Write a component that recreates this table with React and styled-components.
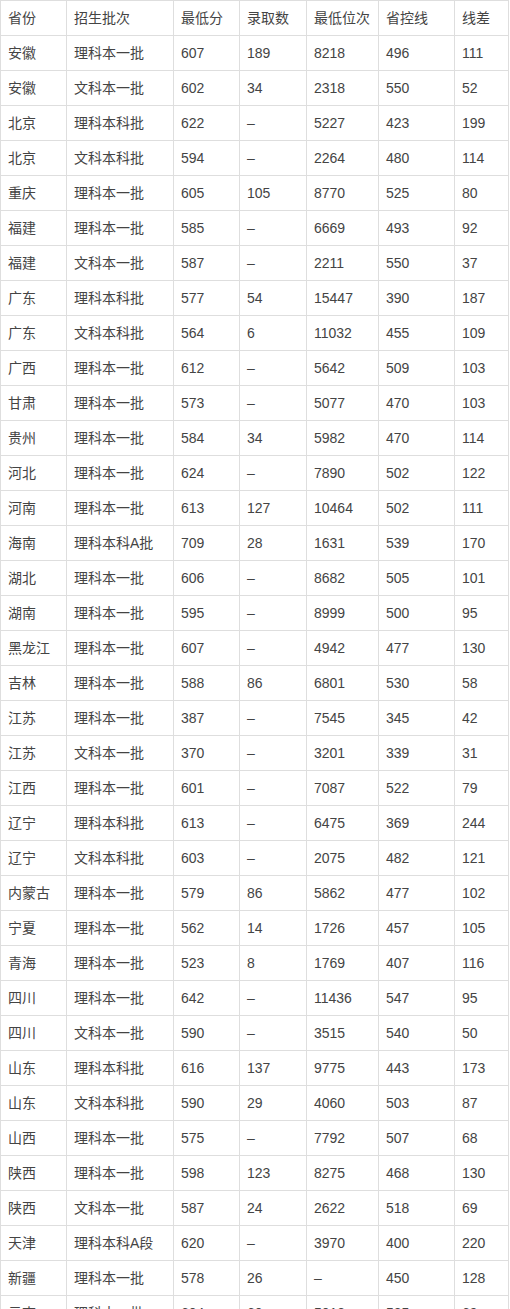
import React from "react";
import styled, { createGlobalStyle } from "styled-components";

const Global = createGlobalStyle`
  html, body { margin: 0; padding: 0; background: #fff; }
  body { font-family: "Liberation Sans", Arial, "Noto Sans CJK SC", sans-serif; }
`;

const Table = styled.table`
  border-collapse: collapse;
  table-layout: fixed;
  width: 508px;
  font-size: 14px;
  color: #444;
`;

const Cell = styled.td`
  border: 1px solid #dedede;
  height: 35px;
  padding: 0 7px;
  box-sizing: border-box;
  white-space: nowrap;
  overflow: hidden;
  vertical-align: middle;
  line-height: 20px;
`;

const HeadCell = styled(Cell).attrs({ as: "th" })`
  font-weight: normal;
  text-align: left;
`;

const widths = [66, 107, 66, 67, 72, 76, 54];
const head = ["省份", "招生批次", "最低分", "录取数", "最低位次", "省控线", "线差"];

const rows = [
  ["安徽", "理科本一批", "607", "189", "8218", "496", "111"],
  ["安徽", "文科本一批", "602", "34", "2318", "550", "52"],
  ["北京", "理科本科批", "622", "–", "5227", "423", "199"],
  ["北京", "文科本科批", "594", "–", "2264", "480", "114"],
  ["重庆", "理科本一批", "605", "105", "8770", "525", "80"],
  ["福建", "理科本一批", "585", "–", "6669", "493", "92"],
  ["福建", "文科本一批", "587", "–", "2211", "550", "37"],
  ["广东", "理科本科批", "577", "54", "15447", "390", "187"],
  ["广东", "文科本科批", "564", "6", "11032", "455", "109"],
  ["广西", "理科本一批", "612", "–", "5642", "509", "103"],
  ["甘肃", "理科本一批", "573", "–", "5077", "470", "103"],
  ["贵州", "理科本一批", "584", "34", "5982", "470", "114"],
  ["河北", "理科本一批", "624", "–", "7890", "502", "122"],
  ["河南", "理科本一批", "613", "127", "10464", "502", "111"],
  ["海南", "理科本科A批", "709", "28", "1631", "539", "170"],
  ["湖北", "理科本一批", "606", "–", "8682", "505", "101"],
  ["湖南", "理科本一批", "595", "–", "8999", "500", "95"],
  ["黑龙江", "理科本一批", "607", "–", "4942", "477", "130"],
  ["吉林", "理科本一批", "588", "86", "6801", "530", "58"],
  ["江苏", "理科本一批", "387", "–", "7545", "345", "42"],
  ["江苏", "文科本一批", "370", "–", "3201", "339", "31"],
  ["江西", "理科本一批", "601", "–", "7087", "522", "79"],
  ["辽宁", "理科本科批", "613", "–", "6475", "369", "244"],
  ["辽宁", "文科本科批", "603", "–", "2075", "482", "121"],
  ["内蒙古", "理科本一批", "579", "86", "5862", "477", "102"],
  ["宁夏", "理科本一批", "562", "14", "1726", "457", "105"],
  ["青海", "理科本一批", "523", "8", "1769", "407", "116"],
  ["四川", "理科本一批", "642", "–", "11436", "547", "95"],
  ["四川", "文科本一批", "590", "–", "3515", "540", "50"],
  ["山东", "理科本科批", "616", "137", "9775", "443", "173"],
  ["山东", "文科本科批", "590", "29", "4060", "503", "87"],
  ["山西", "理科本一批", "575", "–", "7792", "507", "68"],
  ["陕西", "理科本一批", "598", "123", "8275", "468", "130"],
  ["陕西", "文科本一批", "587", "24", "2622", "518", "69"],
  ["天津", "理科本科A段", "620", "–", "3970", "400", "220"],
  ["新疆", "理科本一批", "578", "26", "–", "450", "128"],
  ["云南", "理科本一批", "604", "60", "5013", "535", "69"],
];

export default function App() {
  return (
    <>
      <Global />
      <Table>
        <colgroup>
          {widths.map((w, i) => (
            <col key={i} style={{ width: w }} />
          ))}
        </colgroup>
        <thead>
          <tr>
            {head.map((h) => (
              <HeadCell key={h}>{h}</HeadCell>
            ))}
          </tr>
        </thead>
        <tbody>
          {rows.map((r, i) => (
            <tr key={i}>
              {r.map((c, j) => (
                <Cell key={j}>{c}</Cell>
              ))}
            </tr>
          ))}
        </tbody>
      </Table>
    </>
  );
}
